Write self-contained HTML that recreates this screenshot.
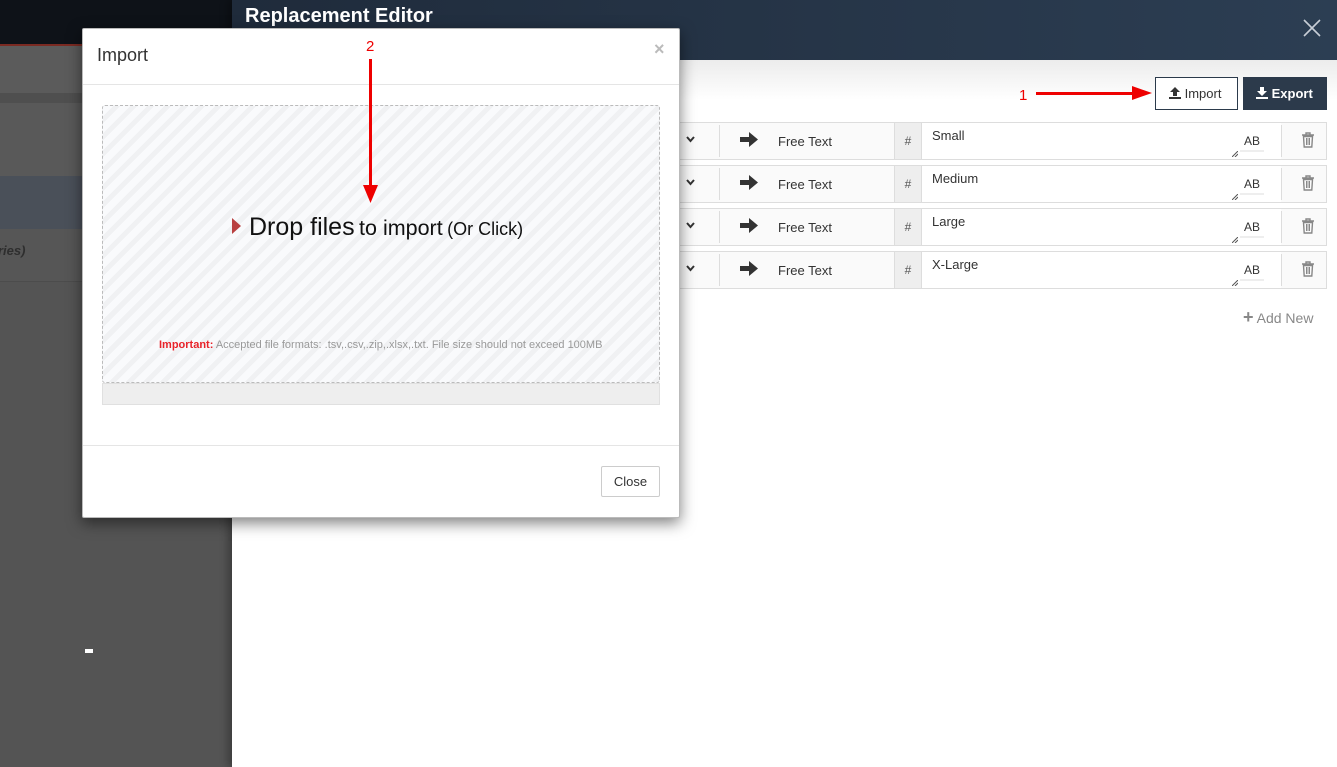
<!DOCTYPE html>
<html><head><meta charset="utf-8"><style>
*{box-sizing:border-box;margin:0;padding:0}
body{width:1337px;height:767px;overflow:hidden;position:relative;font-family:"Liberation Sans",Arial,sans-serif;background:#545454}
.abs{position:absolute}
.row{position:absolute;left:660px;width:667px;height:38px;border:1px solid #ddd;background:#fafafa}
</style></head><body>
<div class="abs" style="left:0;top:0;width:232px;height:44px;background:#0e1218"></div>
<div class="abs" style="left:0;top:44px;width:232px;height:2px;background:#7a2a22"></div>
<div class="abs" style="left:0;top:46px;width:232px;height:47px;background:#5b5b5b"></div>
<div class="abs" style="left:0;top:93px;width:232px;height:10px;background:#4f4f4f"></div>
<div class="abs" style="left:0;top:103px;width:232px;height:73px;background:#595959"></div>
<div class="abs" style="left:0;top:176px;width:232px;height:53px;background:#4a5059"></div>
<div class="abs" style="left:0;top:229px;width:232px;height:53px;background:#565656;border-bottom:1px solid #4c4c4c"></div>
<div class="abs" style="left:-2px;top:243px;font-size:13px;font-style:italic;font-weight:bold;color:#2e2e2e">ries)</div>
<div class="abs" style="left:85px;top:649px;width:8px;height:4px;background:#fff"></div>
<div class="abs" style="left:232px;top:0;width:1105px;height:767px;background:#fff;box-shadow:-4px 0 8px rgba(0,0,0,.3)"></div>
<div class="abs" style="left:232px;top:0;width:1105px;height:60px;background:linear-gradient(90deg,#1f2b3b,#2c3e53)"></div>
<div class="abs" style="left:245px;top:5px;font-size:20px;font-weight:bold;color:#fff">Replacement Editor</div>
<svg class="abs" style="left:1303px;top:19px" width="18" height="18"><path d="M1 1L17 17M17 1L1 17" stroke="#c8ced6" stroke-width="1.6"/></svg>
<div class="abs" style="left:232px;top:60px;width:1105px;height:40px;background:linear-gradient(#ececec,#fff)"></div>
<div class="abs" style="left:1155px;top:77px;width:83px;height:33px;border:1px solid #2b3a4b;background:#fff;color:#333;font-size:13px;line-height:31px;padding-left:13px"><svg width="12" height="12" style="vertical-align:-1px"><path d="M6 0L11 5H8V9H4V5H1Z M0 10H12V12H0Z" fill="#333"/></svg> Import</div>
<div class="abs" style="left:1243px;top:77px;width:84px;height:33px;background:#2c3a4b;color:#fff;font-size:13px;font-weight:bold;line-height:33px;padding-left:13px"><svg width="12" height="12" style="vertical-align:-1px"><path d="M4 0H8V4H11L6 9L1 4H4Z M0 10H12V12H0Z" fill="#fff"/></svg> Export</div>
<div class="abs" style="left:1019px;top:87px;color:#e00;font-size:15px">1</div>
<div class="abs" style="left:1036px;top:92px;width:100px;height:3px;background:#e00"></div>
<svg class="abs" style="left:1132px;top:86px" width="20" height="14"><path d="M0 0L20 7L0 14Z" fill="#e00"/></svg>
<div class="row" style="top:122px"></div><div class="row" style="top:165px"></div><div class="row" style="top:208px"></div><div class="row" style="top:251px"></div>
<div id="rows"></div>
<script>
var names=["Small","Medium","Large","X-Large"],h="";
names.forEach(function(n,i){var t=122+43*i;
h+='<svg class="abs" style="left:686px;top:'+(t+14)+'px" width="9" height="7"><path d="M1 1L4.5 5L8 1" stroke="#333" stroke-width="2" fill="none"/></svg>'+
'<div class="abs" style="left:719px;top:'+(t+3)+'px;width:1px;height:32px;background:#ddd"></div>'+
'<svg class="abs" style="left:740px;top:'+(t+10)+'px" width="18" height="15"><path d="M0 5H9V0L18 7.5L9 15V10H0Z" fill="#333"/></svg>'+
'<div class="abs" style="left:778px;top:'+(t+12)+'px;font-size:13px;color:#333">Free Text</div>'+
'<div class="abs" style="left:894px;top:'+(t+1)+'px;width:28px;height:36px;background:#eee;border-left:1px solid #ddd;border-right:1px solid #ddd;font-size:12px;color:#555;text-align:center;line-height:36px">#</div>'+
'<div class="abs" style="left:922px;top:'+(t+1)+'px;width:359px;height:36px;background:#fff"></div>'+
'<div class="abs" style="left:932px;top:'+(t+6)+'px;font-size:13px;color:#333">'+n+'</div>'+
'<svg class="abs" style="left:1232px;top:'+(t+29)+'px" width="6" height="6"><path d="M0 6L6 0M3 6L6 3" stroke="#555"/></svg>'+
'<div class="abs" style="left:1244px;top:'+(t+12)+'px;font-size:12px;color:#333">AB</div>'+
'<div class="abs" style="left:1240px;top:'+(t+28)+'px;width:24px;height:2px;background:#eee"></div>'+
'<div class="abs" style="left:1281px;top:'+(t+3)+'px;width:1px;height:32px;background:#ddd"></div>'+
'<svg class="abs" style="left:1301px;top:'+(t+10)+'px" width="14" height="16"><path d="M1 3H13M5 3V1H9V3M2.5 4.5H11.5L10.8 15H3.2Z" stroke="#888" stroke-width="1.4" fill="none"/><path d="M5.5 6V13M7 6V13M8.5 6V13" stroke="#888"/></svg>';});
document.getElementById('rows').innerHTML=h;
</script>
<div class="abs" style="left:1243px;top:307px;font-size:14px;color:#888"><b style="font-size:18px">+</b> Add New</div>
<div class="abs" style="left:82px;top:28px;width:598px;height:490px;background:#fff;border:1px solid #bbb;border-radius:2px;box-shadow:0 5px 15px rgba(0,0,0,.5)"></div>
<div class="abs" style="left:97px;top:45px;font-size:18px;color:#333">Import</div>
<div class="abs" style="left:654px;top:39px;font-size:18px;font-weight:bold;color:#bbb">×</div>
<div class="abs" style="left:83px;top:84px;width:596px;height:1px;background:#e5e5e5"></div>
<div class="abs" style="left:102px;top:105px;width:558px;height:278px;border:1px dashed #bbb;border-radius:3px;background:repeating-linear-gradient(-45deg,#f0f1f3 0 5px,#f9fafc 5px 12px)"></div>
<div class="abs" style="left:102px;top:383px;width:558px;height:22px;background:#eee;border:1px solid #e0e0e0"></div>
<svg class="abs" style="left:232px;top:218px" width="10" height="16"><path d="M0 0L9 8L0 16Z" fill="#b94040"/></svg>
<div class="abs" style="left:249px;top:213px;color:#111;white-space:nowrap"><span style="font-size:25px">Drop files</span> <span style="font-size:21.5px">to import</span> <span style="font-size:18px">(Or Click)</span></div>
<div class="abs" style="left:159px;top:339px;font-size:11px;color:#999;white-space:nowrap"><b style="color:#e8232a">Important:</b> Accepted file formats: .tsv,.csv,.zip,.xlsx,.txt. File size should not exceed 100MB</div>
<div class="abs" style="left:83px;top:445px;width:596px;height:1px;background:#e5e5e5"></div>
<div class="abs" style="left:601px;top:466px;width:59px;height:31px;border:1px solid #ccc;border-radius:2px;font-size:13px;color:#333;text-align:center;line-height:29px">Close</div>
<div class="abs" style="left:366px;top:38px;color:#e00;font-size:15px">2</div>
<div class="abs" style="left:369px;top:59px;width:3px;height:128px;background:#e00"></div>
<svg class="abs" style="left:363px;top:185px" width="15" height="18"><path d="M0 0L15 0L7.5 18Z" fill="#e00"/></svg>
</body></html>
